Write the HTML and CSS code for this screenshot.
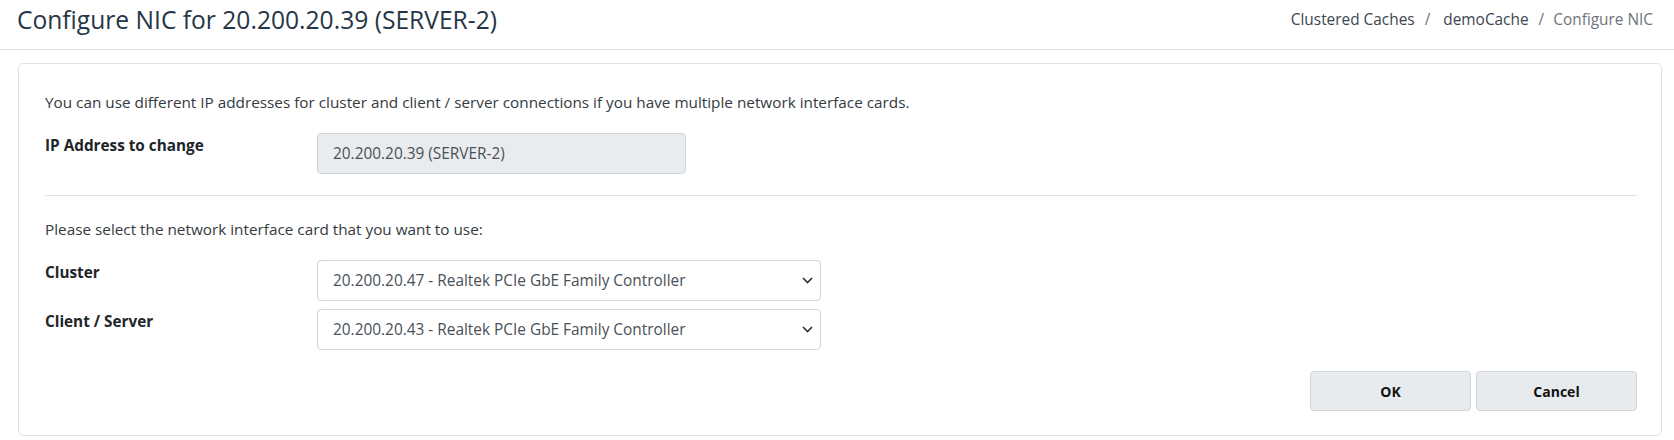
FILE: index.html
```html
<!DOCTYPE html>
<html lang="en">
<head>
    <meta charset="UTF-8">
    <meta name="viewport" content="width=device-width, initial-scale=1.0">
    <title>Configure NIC</title>
    <link rel="stylesheet" href="styles.css">
</head>
<body>
    <div class="page-header">
        <h1 class="page-title">Configure NIC for 20.200.20.39 (SERVER-2)</h1>
        <ol class="breadcrumb">
            <li class="crumb"><a href="#">Clustered Caches</a></li>
            <li class="crumb"><a href="#">&nbsp;demoCache</a></li>
            <li class="crumb active">Configure NIC</li>
        </ol>
    </div>

    <div class="card">
        <p class="card-text">You can use different IP addresses for cluster and client / server connections if you have multiple network interface cards.</p>
        <div class="form-row">
            <label class="form-label" for="ip_address">IP Address to change</label>
            <input type="text" id="ip_address" class="form-input" value="20.200.20.39 (SERVER-2)" readonly>
        </div>

        <hr class="divider">

        <p class="card-text">Please select the network interface card that you want to use:</p>
        <div class="form-row">
            <label class="form-label" for="cluster_nic">Cluster</label>
            <select id="cluster_nic" class="form-select">
                <option selected>20.200.20.47 - Realtek PCIe GbE Family Controller</option>
                <option>20.200.20.43 - Realtek PCIe GbE Family Controller</option>
            </select>
        </div>
        <div class="form-row">
            <label class="form-label" for="client_nic">Client / Server</label>
            <select id="client_nic" class="form-select">
                <option>20.200.20.47 - Realtek PCIe GbE Family Controller</option>
                <option selected>20.200.20.43 - Realtek PCIe GbE Family Controller</option>
            </select>
        </div>

        <div class="button-group">
            <button class="btn" id="ok">OK</button>
            <button class="btn" id="cancel">Cancel</button>
        </div>
    </div>
</body>
</html>
```

FILE: styles.css
```css
body {
    margin: 0;
    font-family: "Open Sans", "Noto Sans", sans-serif;
    font-size: 15.3px;
    color: #343a40;
    background-color: #fff;
}

.page-header {
    box-sizing: border-box;
    display: flex;
    justify-content: space-between;
    align-items: flex-start;
    height: 50px;
    padding: 2px 21px 0 17px;
    border-bottom: 1px solid #dee2e6;
}
.page-title {
    margin: 0;
    font-size: 24.6px;
    font-weight: 400;
    color: #263646;
    line-height: 36px;
}
.breadcrumb {
    display: flex;
    list-style: none;
    margin: 7px 0 0 0;
    padding: 0;
    font-size: 15.4px;
    line-height: 22px;
}
.crumb + .crumb::before {
    content: "/";
    padding: 0 9px 0 10px;
    color: #6c757d;
}
.crumb a {
    color: #3d4650;
    text-decoration: none;
}
.crumb.active {
    color: #6c757d;
}

.card {
    margin: 13px 12px 3px 18px;
    padding: 27px 24px 24px 26px;
    border: 1px solid #dfe2e5;
    border-radius: 5px;
}
.card-text {
    margin: 0 0 20px 0;
    line-height: 22px;
}

.form-row {
    display: flex;
    align-items: flex-start;
    margin-bottom: 8px;
}
.form-label {
    width: 272px;
    flex-shrink: 0;
    padding-top: 1px;
    font-weight: 700;
    line-height: 22px;
    color: #212529;
}
.form-input,
.form-select {
    box-sizing: border-box;
    height: 41px;
    padding: 0 15px;
    font-family: inherit;
    font-size: 15.4px;
    color: #495057;
    border: 1px solid #ced4da;
    border-radius: 4px;
    background-color: #fff;
}
.form-input {
    width: 369px;
    background-color: #e9ecef;
    outline: none;
}
.form-select {
    width: 504px;
    appearance: none;
    -webkit-appearance: none;
    background-image: url("data:image/svg+xml,%3Csvg xmlns='http://www.w3.org/2000/svg' width='11' height='7' viewBox='0 0 11 7'%3E%3Cpath d='M1 1l4.5 4.5L10 1' fill='none' stroke='%23333' stroke-width='1.7'/%3E%3C/svg%3E");
    background-repeat: no-repeat;
    background-position: right 7px center;
    background-size: 11px 7px;
}

.divider {
    border: 0;
    border-top: 1px solid #e2e5e8;
    margin: 21px 0 22px 0;
}

.button-group {
    display: flex;
    justify-content: flex-end;
    gap: 5px;
    margin-top: 21px;
}
.btn {
    width: 161px;
    height: 40px;
    font-family: inherit;
    font-size: 14px;
    font-weight: 700;
    color: #111;
    background-color: #e8ebee;
    border: 1px solid #ced4da;
    border-radius: 4px;
}
```
